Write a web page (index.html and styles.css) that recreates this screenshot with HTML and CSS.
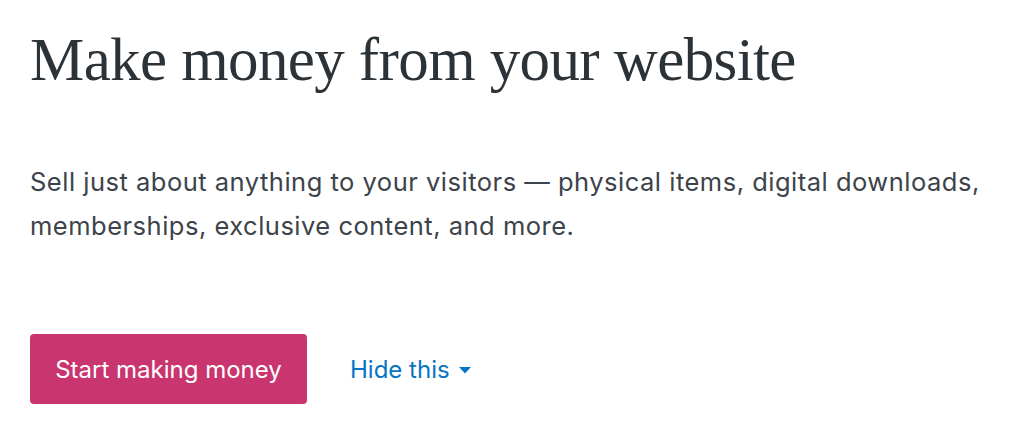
FILE: index.html
```html
<!DOCTYPE html>
<html>
<head>
<meta charset="utf-8">
<link rel="stylesheet" href="styles.css">
</head>
<body>
<main class="promo">
  <h1 class="promo-title">Make money from your website</h1>
  <p class="promo-text">Sell just about anything to your visitors — physical items, digital downloads, memberships, exclusive content, and more.</p>
  <div class="promo-actions">
    <a class="btn-primary" href="#">Start making money</a>
    <a class="btn-link" href="#">Hide this <svg class="caret" width="12" height="7" viewBox="0 0 12 7"><path d="M0 0h12L6 6.5z" fill="currentColor"/></svg></a>
  </div>
</main>
</body>
</html>
```
FILE: styles.css
```css
html, body {
  margin: 0;
  padding: 0;
  background: #fff;
}
.promo {
  padding: 22px 30px 0 30px;
  font-family: "Inter", "Noto Sans", sans-serif;
}
.promo-title {
  margin: 0;
  font-family: "Liberation Serif", serif;
  font-weight: 400;
  font-size: 61px;
  line-height: 76px;
  color: #2c3338;
  letter-spacing: -0.6px;
}
.promo-text {
  margin: 62px 0 0 0;
  font-size: 25.5px;
  line-height: 44px;
  color: #3c434a;
  letter-spacing: 0.5px;
  max-width: 975px;
}
.promo-actions {
  display: flex;
  align-items: center;
  gap: 43px;
  margin-top: 86px;
}
.btn-primary {
  display: flex;
  align-items: center;
  justify-content: center;
  width: 277px;
  height: 70px;
  box-sizing: border-box;
  background: #c9356e;
  color: #fff;
  border-radius: 4px;
  text-decoration: none;
  font-size: 24px;
}
.btn-link {
  display: flex;
  align-items: center;
  gap: 9px;
  color: #0675c4;
  text-decoration: none;
  font-size: 24px;
}
.caret {
  display: block;
  margin-top: 2px;
}
```
